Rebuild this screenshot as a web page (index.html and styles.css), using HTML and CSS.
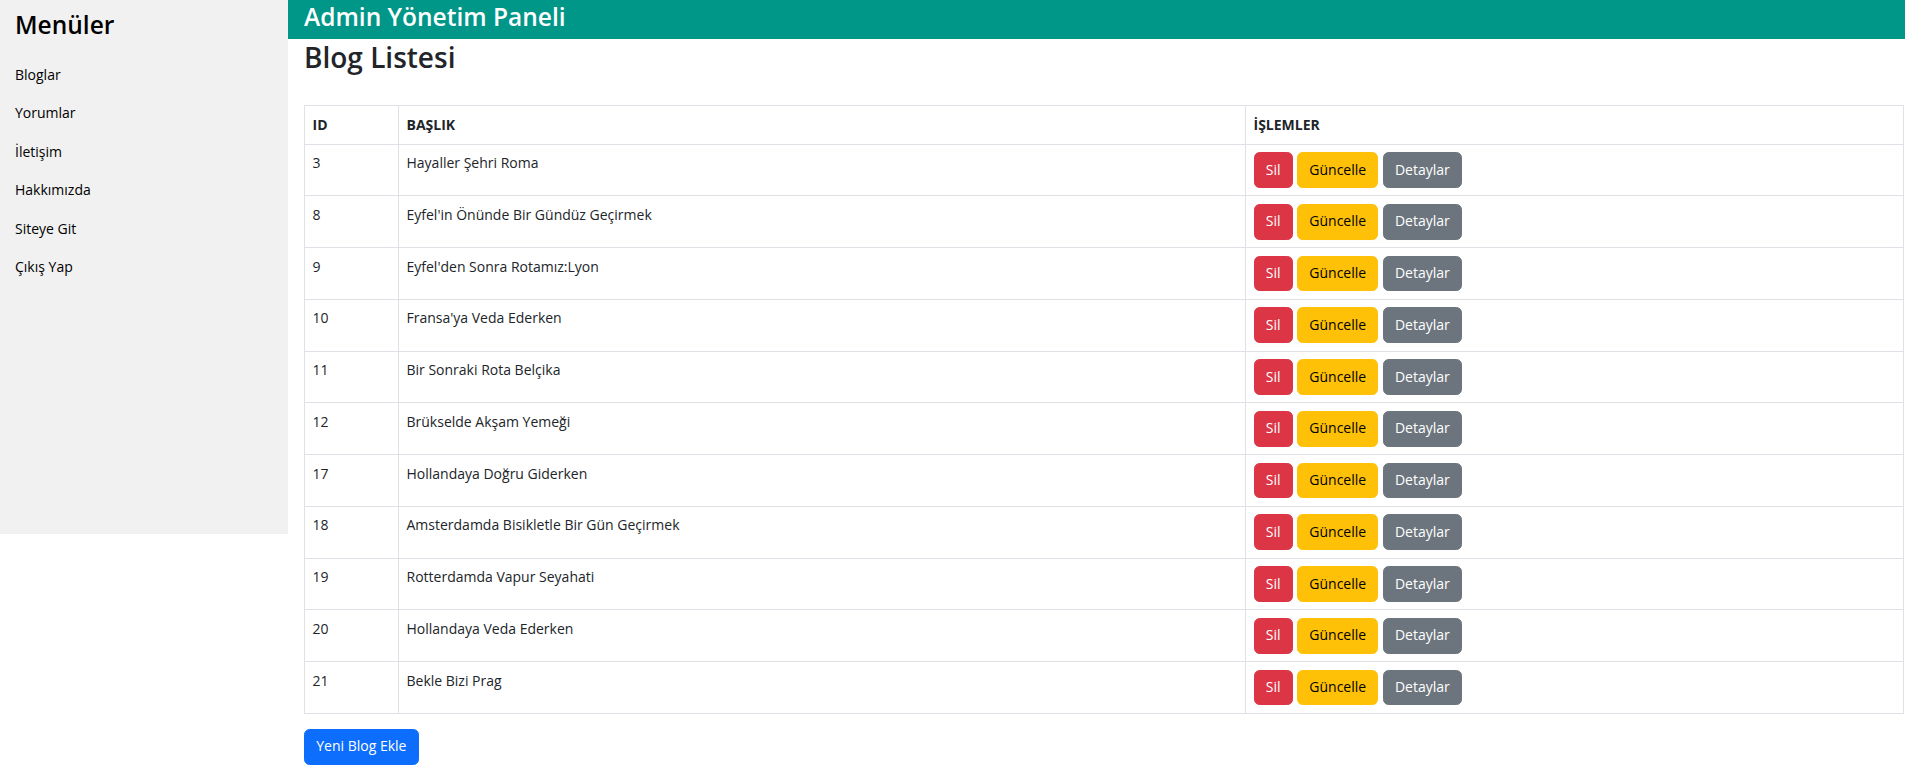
FILE: index.html
```html
<!DOCTYPE html>
<html lang="tr">
<head>
<meta charset="utf-8">
<title>Admin Yönetim Paneli</title>
<link rel="stylesheet" href="styles.css">
</head>
<body>
<div class="layout">
  <aside class="sidebar">
    <h3 class="side-title">Menüler</h3>
    <nav class="side-menu">
      <a class="side-item" href="#">Bloglar</a>
      <a class="side-item" href="#">Yorumlar</a>
      <a class="side-item" href="#">İletişim</a>
      <a class="side-item" href="#">Hakkımızda</a>
      <a class="side-item" href="#">Siteye Git</a>
      <a class="side-item" href="#">Çıkış Yap</a>
    </nav>
  </aside>
  <main class="main">
    <header class="topbar">
      <h3 class="topbar-title">Admin Yönetim Paneli</h3>
    </header>
    <section class="content">
      <h2 class="page-title">Blog Listesi</h2>
      <table class="table">
        <colgroup>
          <col class="col-id">
          <col class="col-title">
          <col>
        </colgroup>
        <thead>
          <tr><th>ID</th><th>BAŞLIK</th><th>İŞLEMLER</th></tr>
        </thead>
        <tbody>
          <tr><td>3</td><td>Hayaller Şehri Roma</td><td><div class="actions"><a class="btn btn-danger" href="#">Sil</a><a class="btn btn-warning" href="#">Güncelle</a><a class="btn btn-secondary" href="#">Detaylar</a></div></td></tr>
          <tr><td>8</td><td>Eyfel'in Önünde Bir Gündüz Geçirmek</td><td><div class="actions"><a class="btn btn-danger" href="#">Sil</a><a class="btn btn-warning" href="#">Güncelle</a><a class="btn btn-secondary" href="#">Detaylar</a></div></td></tr>
          <tr><td>9</td><td>Eyfel'den Sonra Rotamız:Lyon</td><td><div class="actions"><a class="btn btn-danger" href="#">Sil</a><a class="btn btn-warning" href="#">Güncelle</a><a class="btn btn-secondary" href="#">Detaylar</a></div></td></tr>
          <tr><td>10</td><td>Fransa'ya Veda Ederken</td><td><div class="actions"><a class="btn btn-danger" href="#">Sil</a><a class="btn btn-warning" href="#">Güncelle</a><a class="btn btn-secondary" href="#">Detaylar</a></div></td></tr>
          <tr><td>11</td><td>Bir Sonraki Rota Belçika</td><td><div class="actions"><a class="btn btn-danger" href="#">Sil</a><a class="btn btn-warning" href="#">Güncelle</a><a class="btn btn-secondary" href="#">Detaylar</a></div></td></tr>
          <tr><td>12</td><td>Brükselde Akşam Yemeği</td><td><div class="actions"><a class="btn btn-danger" href="#">Sil</a><a class="btn btn-warning" href="#">Güncelle</a><a class="btn btn-secondary" href="#">Detaylar</a></div></td></tr>
          <tr><td>17</td><td>Hollandaya Doğru Giderken</td><td><div class="actions"><a class="btn btn-danger" href="#">Sil</a><a class="btn btn-warning" href="#">Güncelle</a><a class="btn btn-secondary" href="#">Detaylar</a></div></td></tr>
          <tr><td>18</td><td>Amsterdamda Bisikletle Bir Gün Geçirmek</td><td><div class="actions"><a class="btn btn-danger" href="#">Sil</a><a class="btn btn-warning" href="#">Güncelle</a><a class="btn btn-secondary" href="#">Detaylar</a></div></td></tr>
          <tr><td>19</td><td>Rotterdamda Vapur Seyahati</td><td><div class="actions"><a class="btn btn-danger" href="#">Sil</a><a class="btn btn-warning" href="#">Güncelle</a><a class="btn btn-secondary" href="#">Detaylar</a></div></td></tr>
          <tr><td>20</td><td>Hollandaya Veda Ederken</td><td><div class="actions"><a class="btn btn-danger" href="#">Sil</a><a class="btn btn-warning" href="#">Güncelle</a><a class="btn btn-secondary" href="#">Detaylar</a></div></td></tr>
          <tr><td>21</td><td>Bekle Bizi Prag</td><td><div class="actions"><a class="btn btn-danger" href="#">Sil</a><a class="btn btn-warning" href="#">Güncelle</a><a class="btn btn-secondary" href="#">Detaylar</a></div></td></tr>
        </tbody>
      </table>
      <a class="btn btn-primary" href="#">Yeni Blog Ekle</a>
    </section>
  </main>
</div>
</body>
</html>
```
FILE: styles.css
```css
* { box-sizing: border-box; }

html, body {
  margin: 0;
  padding: 0;
}

body {
  font-family: "Open Sans", "Noto Sans", sans-serif;
  font-size: 14px;
  line-height: 22.5px;
  color: #212529;
  background: #fff;
}

.layout {
  display: flex;
  align-items: flex-start;
}

.sidebar {
  flex: 0 0 288px;
  width: 288px;
  height: 534px;
  background: #f1f1f1;
  padding-top: 9px;
}

.side-title {
  margin: 0 0 15px 0;
  padding: 0 15px;
  font-size: 24.5px;
  line-height: 31.5px;
  font-weight: 600;
  color: #000;
}

.side-menu {
  display: flex;
  flex-direction: column;
}

.side-item {
  display: block;
  padding: 8px 15px;
  color: #000;
  text-decoration: none;
  font-size: 14px;
  line-height: 22.5px;
}

.main {
  flex: 1 1 auto;
  min-width: 0;
}

.topbar {
  height: 39px;
  background: #009688;
  padding: 1px 16px 0 16px;
}

.topbar-title {
  margin: 0;
  font-size: 24.5px;
  line-height: 31.5px;
  font-weight: 600;
  color: #fff;
}

.content {
  padding: 0 1px 0 16px;
}

.page-title {
  margin: 0 0 30px 0;
  font-size: 28px;
  line-height: 36px;
  font-weight: 600;
  color: #212529;
}

.table {
  width: 100%;
  border-collapse: collapse;
  table-layout: fixed;
  margin-bottom: 15px;
  color: #212529;
}

.col-id { width: 94px; }
.col-title { width: 847px; }

.table th,
.table td {
  border: 1px solid #dee2e6;
  padding: 7.5px 7.5px;
  text-align: left;
  vertical-align: top;
  font-size: 14px;
  line-height: 22.5px;
}

.table th {
  font-weight: 700;
}

.actions {
  display: flex;
  gap: 4.3px;
}

.btn {
  display: inline-block;
  padding: 5.625px 11.25px;
  font-size: 14px;
  line-height: 22.5px;
  border: 1px solid transparent;
  border-radius: 5.625px;
  text-decoration: none;
  text-align: center;
  white-space: nowrap;
}

.btn-danger {
  background: #dc3545;
  border-color: #dc3545;
  color: #fff;
}

.btn-warning {
  background: #ffc107;
  border-color: #ffc107;
  color: #000;
}

.btn-secondary {
  background: #6c757d;
  border-color: #6c757d;
  color: #fff;
}

.btn-primary {
  background: #0d6efd;
  border-color: #0d6efd;
  color: #fff;
}
```
